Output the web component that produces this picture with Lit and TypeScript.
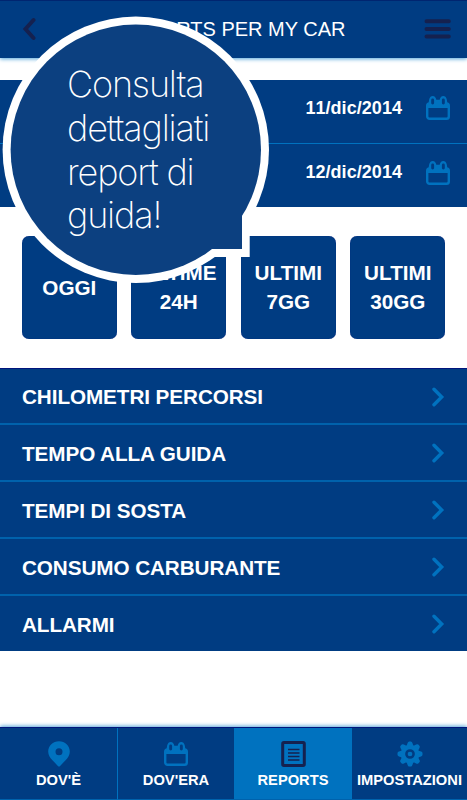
import { LitElement, html, css, svg } from "lit";
import { customElement } from "lit/decorators.js";

const calendar = html`<svg class="icon" width="24" height="24" viewBox="0 0 24 24" fill="none" stroke="#0072bf">
  <rect x="1.2" y="7.4" width="21.6" height="15.4" rx="2.3" stroke-width="2.4" />
  <path d="M1.2 11.9V10C1.2 8 2.2 7.2 3.4 7L20.6 7C21.8 7.2 22.8 8 22.8 10V11.9Z" fill="#0072bf" stroke="none" />
  <path d="M2.6 9C2.6 3.2 4 0 6.6 0C9 0 10 2 10.3 3.8H13.7C14 2 15 0 17.4 0C20 0 21.400 3.200 21.400 9Z" fill="#0072bf" stroke="none" />
  <rect x="5.200" y="2.600" width="2.900" height="5.800" rx="1.400" fill="#003c82" stroke="none" />
  <rect x="15.900" y="2.600" width="2.900" height="5.800" rx="1.400" fill="#003c82" stroke="none" />
</svg>`;

const pin = html`<svg class="icon" width="24" height="26" viewBox="0 0 24 26">
  <path fill="#0072bf" fill-rule="evenodd" d="M12 .2C5.900 .2 1.200 4.900 1.200 10.500C1.200 14.200 3 16.700 5.200 19L10.900 24.900Q12 26 13.100 24.900L18.800 19C21 16.700 22.800 14.200 22.800 10.500C22.800 4.900 18.100 .2 12 .2ZM12 7.200A3.500 3.500 0 1 1 12 14.200A3.500 3.500 0 1 1 12 7.200Z" />
</svg>`;

const report = html`<svg class="icon" width="25" height="26" viewBox="0 0 25 26" fill="none" stroke="#15214f">
  <rect x="1.700" y="1.500" width="21.600" height="23" rx="1.200" stroke-width="3" />
  <path d="M7 8.500H18.500M7 12H18.500M7 15.500H18.500M7 19H18.500" stroke-width="1.300" />
</svg>`;

const teeth = [0, 45, 90, 135, 180, 225, 270, 315];
const gear = html`<svg class="icon" width="26" height="26" viewBox="0 0 26 26" fill="#0072bf">
  ${teeth.map((a) => svg`<path transform=${`rotate(${a} 13 13)`} d="M9.600 5L10.600 2Q11 .5 12.200 .5H13.800Q15 .5 15.400 2L16.400 5Z" />`)}
  <circle cx="13" cy="13" r="9.200" />
  <circle cx="13" cy="13" r="3.600" fill="none" stroke="#003c82" stroke-width="2.500" />
</svg>`;

const arrow = html`<svg class="arrow" width="14" height="20" viewBox="0 0 14 20" fill="none" stroke="#0072bf" stroke-width="3.4" stroke-linecap="round" stroke-linejoin="miter">
  <path d="M3 2.200L10.700 10L3 17.800" />
</svg>`;

@customElement("app-root")
export class AppRoot extends LitElement {
  static styles = css`
    :host {
      display: flex;
      flex-direction: column;
      position: relative;
      width: 467px;
      height: 800px;
      overflow: hidden;
      background: #fff;
      color: #fff;
      font-family: "Liberation Sans", Arial, sans-serif;
      font-weight: 700;
      white-space: nowrap;
    }
    svg { display: block; flex: none; }
    .header {
      box-sizing: border-box;
      height: 58px;
      flex: none;
      display: flex;
      align-items: center;
      justify-content: space-between;
      padding: 0 16px 1px 22px;
      background: #003c82;
      border-top: 1px solid #002570;
      box-shadow: 0 1px 4px #4fa3d8;
      font-weight: 400;
      font-size: 20px;
    }
    .title { padding-left: 5px; padding-top: 1px; }
    .dates { margin-top: 22px; background: #003c82; }
    .date {
      box-sizing: border-box;
      height: 64px;
      display: flex;
      align-items: center;
      justify-content: flex-end;
      gap: 24px;
      padding: 0 17px 7px 0;
      font-size: 18px;
      letter-spacing: 0.05px;
      font-kerning: none;
    }
    .date:first-child { border-bottom: 1px solid #0072bf; }
    .date:last-child { height: 63px; padding-bottom: 6px; }
    .ranges {
      display: grid;
      grid-template-columns: repeat(4, 94.7px);
      gap: 14.8px;
      margin: 29px 0 0 22px;
      height: 102.5px;
    }
    .range {
      display: flex;
      align-items: center;
      justify-content: center;
      text-align: center;
      background: #003c82;
      border-radius: 7px;
      box-shadow: inset 0 0 1px #00157c;
      font-size: 20.7px;
      line-height: 29px;
    }
    .list { margin-top: 29px; background: #003c82; border-top: 1px solid #00157c; box-sizing: border-box; height: 283.500px; }
    .row {
      box-sizing: border-box;
      height: 57px;
      display: flex;
      align-items: center;
      justify-content: space-between;
      padding: 3px 22px 0 22px;
      font-size: 20.7px;
      letter-spacing: -0.08px;
      border-bottom: 2px solid #0062ac;
    }
    .row:first-child { height: 56px; }
    .arrow { position: relative; top: -0.500px; }
    .row:last-child { border-bottom: 0; height: 55px; }
    .footer {
      margin-top: auto;
      flex: none;
      height: 73px;
      box-sizing: border-box;
      display: grid;
      grid-template-columns: 118px 116px 118px 115px;
      background: #003c82;
      border-top: 1px solid #00157c;
      box-shadow: 0 -1px 4px #4fa3d8;
      font-size: 14.700px;
    }
    .tab {
      box-sizing: border-box;
      display: flex;
      flex-direction: column;
      align-items: center;
      padding-top: 12px;
      border-bottom: 1px solid #0062ac;
    }
    .tab:first-child { border-right: 1px solid #0072bf; }
    .on { background: #0072bf; }
    .glyph { height: 27px; display: flex; align-items: center; }
    .label { line-height: 17px; margin-top: 5px; }
    .bubble { position: absolute; left: 0; top: 14px; width: 272px; height: 272px; }
    .shape { position: absolute; left: 0; top: 0; }
    .say {
      position: absolute;
      left: 67px;
      top: 49px;
      font-family: Inter, "Liberation Sans", sans-serif;
      font-weight: 200;
      font-size: 36px;
      line-height: 43.800px;
      letter-spacing: -1.150px;
      white-space: pre;
    }
  `;

  render() {
    const rows = ["CHILOMETRI PERCORSI", "TEMPO ALLA GUIDA", "TEMPI DI SOSTA", "CONSUMO CARBURANTE", "ALLARMI"];
    return html`
      <div class="header">
        <svg width="14" height="24" viewBox="0 0 14 24" fill="none" stroke="#15214f" stroke-width="4" stroke-linecap="round"><path d="M11.500 3L3.500 12L11.500 21" /></svg>
        <span class="title">REPORTS PER MY CAR</span>
        <svg width="27" height="20" viewBox="0 0 27 20" stroke="#15214f" stroke-width="4" stroke-linecap="round"><path d="M2.500 2.300H24.800M2.500 10H24.800M2.500 17.600H24.800" /></svg>
      </div>
      <div class="dates">
        <div class="date"><span>11/dic/2014</span>${calendar}</div>
        <div class="date"><span>12/dic/2014</span>${calendar}</div>
      </div>
      <div class="ranges">
        <div class="range">OGGI</div>
        <div class="range">ULTIME<br />24H</div>
        <div class="range">ULTIMI<br />7GG</div>
        <div class="range">ULTIMI<br />30GG</div>
      </div>
      <div class="list">${rows.map((r) => html`<div class="row"><span>${r}</span>${arrow}</div>`)}</div>
      <div class="footer">
        <div class="tab"><div class="glyph">${pin}</div><span class="label">DOV'È</span></div>
        <div class="tab"><div class="glyph">${calendar}</div><span class="label">DOV'ERA</span></div>
        <div class="tab on"><div class="glyph">${report}</div><span class="label">REPORTS</span></div>
        <div class="tab"><div class="glyph">${gear}</div><span class="label">IMPOSTAZIONI</span></div>
      </div>
      <div class="bubble">
        <svg class="shape" width="272" height="272" viewBox="0 14 272 272">
          <g fill="#fff"><circle cx="135.800" cy="149.800" r="133.200" /><path d="M150 170H249.700V257H150Z" /></g>
          <g fill="#0c4080"><circle cx="135.800" cy="149.800" r="125.200" /><path d="M150 170H242V249H150Z" /></g>
        </svg>
        <div class="say">Consulta
dettagliati
report di
guida!</div>
      </div>
    `;
  }
}
